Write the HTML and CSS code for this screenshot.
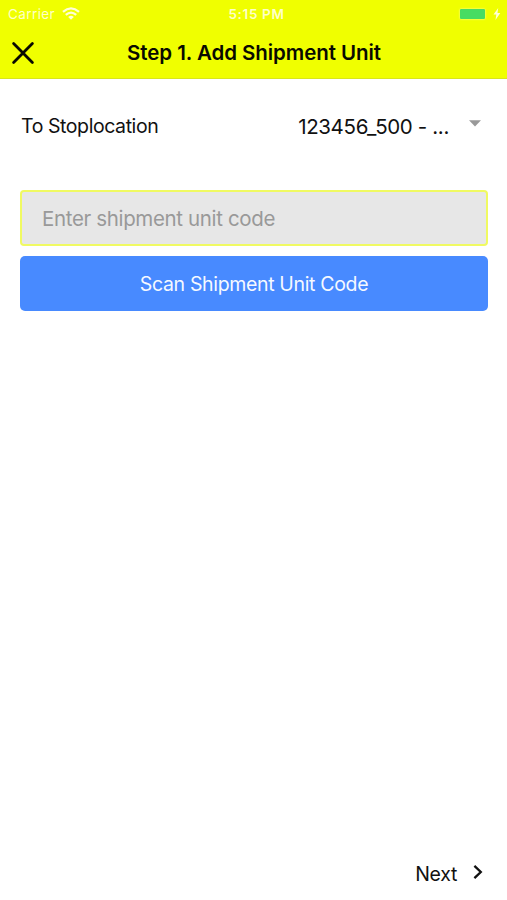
FILE: index.html
```html
<!DOCTYPE html>
<html lang="en">
<head>
<meta charset="utf-8">
<title>Add Shipment Unit</title>
<link rel="stylesheet" href="styles.css">
</head>
<body>
<div class="screen">
  <header class="header">
    <div class="status">
      <div class="carrier"><span>Carrier</span>
        <svg class="wifi" width="18" height="13" viewBox="0 0 18 13" fill="none" stroke="#ffffd8" stroke-width="2.3"><path d="M1 4.8Q9 -2 17 4.8M3.8 7.9Q9 3.4 14.2 7.9"/><path d="M6.2 10Q9 7.6 11.8 10L9 12.8Z" fill="#ffffd8" stroke="none"/></svg>
      </div>
      <span class="time">5:15 PM</span>
      <div class="power">
        <span class="battery"></span>
        <svg class="bolt" width="8" height="12" viewBox="0 0 8 12"><path d="M5.2 0 .5 6.6h2.8L2.5 12 7.3 5H4.5Z" fill="#ffffd8"/></svg>
      </div>
    </div>
    <div class="navbar">
      <svg class="close" width="24" height="24" viewBox="0 0 24 24" fill="none" stroke="#090a00" stroke-width="2.8" stroke-linecap="round"><path d="M2.6 2.6 21.4 21.4M21.4 2.6 2.6 21.4"/></svg>
      <h1 class="title">Step 1. Add Shipment Unit</h1>
    </div>
  </header>
  <main class="content">
    <div class="row">
      <span class="label">To Stoplocation</span>
      <span class="value">123456_500 - ...</span>
      <svg class="caret" width="12" height="7" viewBox="0 0 12 7"><path d="M0 .3h12L6 6.5Z" fill="#999"/></svg>
    </div>
    <div class="field"><span class="placeholder">Enter shipment unit code</span></div>
    <div class="button"><span class="button-text">Scan Shipment Unit Code</span></div>
  </main>
  <footer class="footer">
    <span class="next">Next</span>
    <svg class="chevron" width="10" height="16" viewBox="0 0 10 16" fill="none" stroke="#111" stroke-width="2.3"><path d="M1.4 1.8 7.8 8 1.4 14.2"/></svg>
  </footer>
</div>
</body>
</html>
```
FILE: styles.css
```css
* { box-sizing: border-box; }
body { margin: 0; font-family: Inter, "Liberation Sans", sans-serif; color: #111; background: #fff; }
.screen { height: 900px; display: flex; flex-direction: column; white-space: nowrap; }
.header { height: 79px; background: #f0ff00; border-bottom: 1px solid #d9e51c; }
.status { height: 27px; display: grid; grid-template-columns: 1fr auto 1fr; align-items: center; color: #ffffc8; font-size: 13.5px; padding: 0 6px 0 8px; }
.carrier { display: flex; align-items: center; gap: 7px; letter-spacing: .4px; }
.time { font-weight: 600; font-size: 13.5px; letter-spacing: .65px; margin-left: 4px; }
.power { display: flex; justify-content: flex-end; align-items: center; gap: 8px; }
.battery { width: 25px; height: 10px; background: #47dc62; border-radius: 1px; box-shadow: 0 0 2px #ffffd0; }
.navbar { height: 51px; display: grid; grid-template-columns: 116px auto 1fr; align-items: center; padding-left: 11px; }
.title { margin: 0; font-size: 20.5px; font-weight: 600; line-height: 24px; letter-spacing: -.06px; color: #090a00; }
.content { flex: 1; padding: 0 19px 0 20px; }
.row { display: flex; height: 92px; margin: 1px 0 18px; align-items: center; padding: 0 7px 0 1px; }
.label { flex: 1; font-size: 19.5px; letter-spacing: -.42px; }
.value { font-size: 20.5px; letter-spacing: -.35px; margin-right: 20px; }
.caret { margin-bottom: 5px; }
.field { height: 56px; border: 2px solid #f0fa62; border-radius: 4px; background: #e7e7e7; display: flex; align-items: center; padding: 1px 0 0 20px; color: #999; }
.placeholder { font-size: 20.5px; letter-spacing: -.35px; }
.button { height: 55px; margin-top: 10px; padding-top: 1px; border-radius: 5px; background: #488aff; color: #f5f9ff; display: flex; align-items: center; justify-content: center; }
.button-text { font-size: 19.5px; letter-spacing: -.34px; }
.footer { height: 54px; display: flex; align-items: center; justify-content: flex-end; padding-right: 24px; gap: 16px; }
.next { font-size: 19.5px; letter-spacing: -.3px; padding-top: 1px; }
.chevron { margin-bottom: 2px; }
```
